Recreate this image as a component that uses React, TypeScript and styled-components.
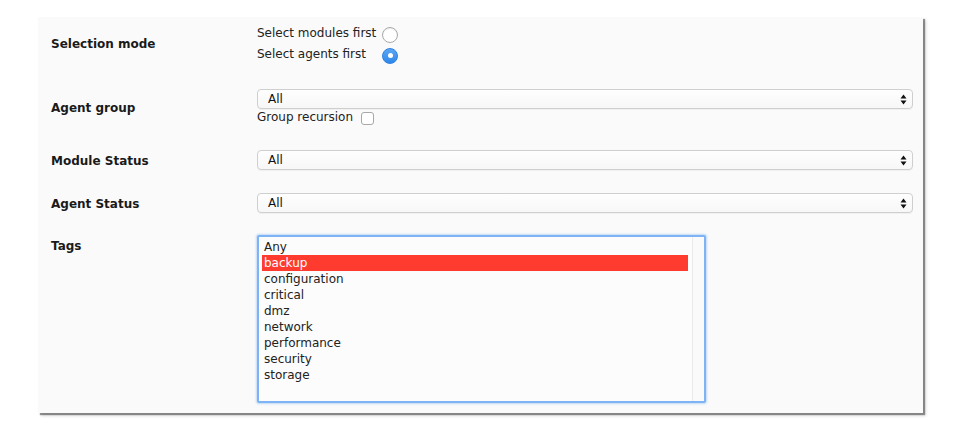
import React from "react";
import styled, { createGlobalStyle } from "styled-components";

const Global = createGlobalStyle`
  html, body { margin: 0; padding: 0; background: #ffffff; }
  body { font-family: "DejaVu Sans", Verdana, sans-serif; font-size: 12px; color: #222; }
`;

const Page = styled.div`
  width: 962px;
  height: 431px;
  padding: 17px 0 0 38px;
  box-sizing: border-box;
`;

const Panel = styled.div`
  width: 885px;
  height: 396px;
  box-sizing: border-box;
  background: #fafafa;
  padding: 5px 10px 10px 13px;
  box-shadow: 2px 2px 1px rgba(0, 0, 0, 0.4), 3px 3px 3px rgba(0, 0, 0, 0.14);
  display: flex;
  flex-direction: column;
`;

const Row = styled.div<{ $top?: number; $start?: boolean }>`
  display: grid;
  grid-template-columns: 206px 1fr;
  align-items: ${(p) => (p.$start ? "start" : "center")};
  margin-top: ${(p) => p.$top ?? 0}px;
`;

const Label = styled.div<{ $offset?: number }>`
  font-weight: bold;
  font-size: 12px;
  line-height: 16px;
  color: #1a1a1a;
  padding-top: ${(p) => p.$offset ?? 2}px;
`;

const Field = styled.div`
  display: flex;
  flex-direction: column;
`;

const RadioGrid = styled.div`
  display: grid;
  grid-template-columns: max-content 16px;
  column-gap: 6px;
  grid-auto-rows: 21px;
  align-items: center;
`;

const OptionText = styled.span`
  line-height: 16px;
  color: #222;
`;

const Radio = styled.span<{ $checked?: boolean }>`
  width: 16px;
  height: 16px;
  box-sizing: border-box;
  border-radius: 50%;
  margin-top: 4px;
  display: flex;
  align-items: center;
  justify-content: center;
  background: ${(p) => (p.$checked ? "linear-gradient(#5aa6f5, #2f87ea)" : "#fff")};
  border: 1px solid ${(p) => (p.$checked ? "#2f80e0" : "#a9a9a9")};
  box-shadow: ${(p) => (p.$checked ? "none" : "inset 0 1px 1px rgba(0,0,0,0.08)")};
  &::after {
    content: "";
    display: ${(p) => (p.$checked ? "block" : "none")};
    width: 5px;
    height: 5px;
    border-radius: 50%;
    background: #fff;
  }
`;

const Select = styled.div`
  height: 20px;
  box-sizing: border-box;
  border: 1px solid #cfcfcf;
  border-radius: 4px;
  background: linear-gradient(#fefefe, #f7f7f7);
  box-shadow: 0 1px 0 rgba(0, 0, 0, 0.04);
  display: flex;
  align-items: center;
  justify-content: space-between;
  padding: 0 5px 0 10px;
  line-height: 16px;
  color: #111;
`;

const Arrows = styled.svg`
  width: 7px;
  height: 11px;
  display: block;
`;

const CheckLine = styled.div`
  display: flex;
  align-items: center;
  height: 16px;
`;

const Checkbox = styled.span`
  width: 13px;
  height: 13px;
  box-sizing: border-box;
  border: 1px solid #a8a8a8;
  border-radius: 3px;
  background: #fff;
  margin-left: 8px;
  margin-top: 3px;
`;

const ListBox = styled.div`
  width: 449px;
  height: 168px;
  box-sizing: border-box;
  border: 2px solid #7fb4f4;
  border-radius: 2px;
  box-shadow: 0 0 2px 1px rgba(127, 180, 244, 0.45);
  background: #fcfcfc;
  display: flex;
`;

const ListItems = styled.div`
  flex: 1;
  padding: 2px 4px 2px 3px;
  display: flex;
  flex-direction: column;
`;

const Item = styled.div<{ $selected?: boolean }>`
  height: 16px;
  line-height: 17px;
  padding-left: 2px;
  background: ${(p) => (p.$selected ? "#ff3b30" : "transparent")};
  color: ${(p) => (p.$selected ? "#ffffff" : "#222")};
`;

const Gutter = styled.div`
  width: 11px;
  border-left: 1px solid #ebebeb;
  background: #fafafa;
`;

const SelectBox = ({ value }: { value: string }) => (
  <Select>
    <span>{value}</span>
    <Arrows viewBox="0 0 7 11">
      <path d="M3.5 0.5 L6.5 4.5 L0.5 4.5 Z" fill="#111" />
      <path d="M3.5 10.5 L6.5 6.5 L0.5 6.5 Z" fill="#111" />
    </Arrows>
  </Select>
);

const tags = ["Any", "backup", "configuration", "critical", "dmz", "network", "performance", "security", "storage"];

export default function App() {
  return (
    <>
      <Global />
      <Page>
        <Panel>
          <Row>
            <Label>Selection mode</Label>
            <RadioGrid>
              <OptionText>Select modules first</OptionText>
              <Radio />
              <OptionText>Select agents first</OptionText>
              <Radio $checked />
            </RadioGrid>
          </Row>
          <Row $top={25}>
            <Label>Agent group</Label>
            <Field>
              <SelectBox value="All" />
              <CheckLine>
                <OptionText>Group recursion</OptionText>
                <Checkbox />
              </CheckLine>
            </Field>
          </Row>
          <Row $top={25}>
            <Label>Module Status</Label>
            <SelectBox value="All" />
          </Row>
          <Row $top={23}>
            <Label>Agent Status</Label>
            <SelectBox value="All" />
          </Row>
          <Row $top={22} $start>
            <Label $offset={3}>Tags</Label>
            <ListBox>
              <ListItems>
                {tags.map((t) => (
                  <Item key={t} $selected={t === "backup"}>
                    {t}
                  </Item>
                ))}
              </ListItems>
              <Gutter />
            </ListBox>
          </Row>
        </Panel>
      </Page>
    </>
  );
}
